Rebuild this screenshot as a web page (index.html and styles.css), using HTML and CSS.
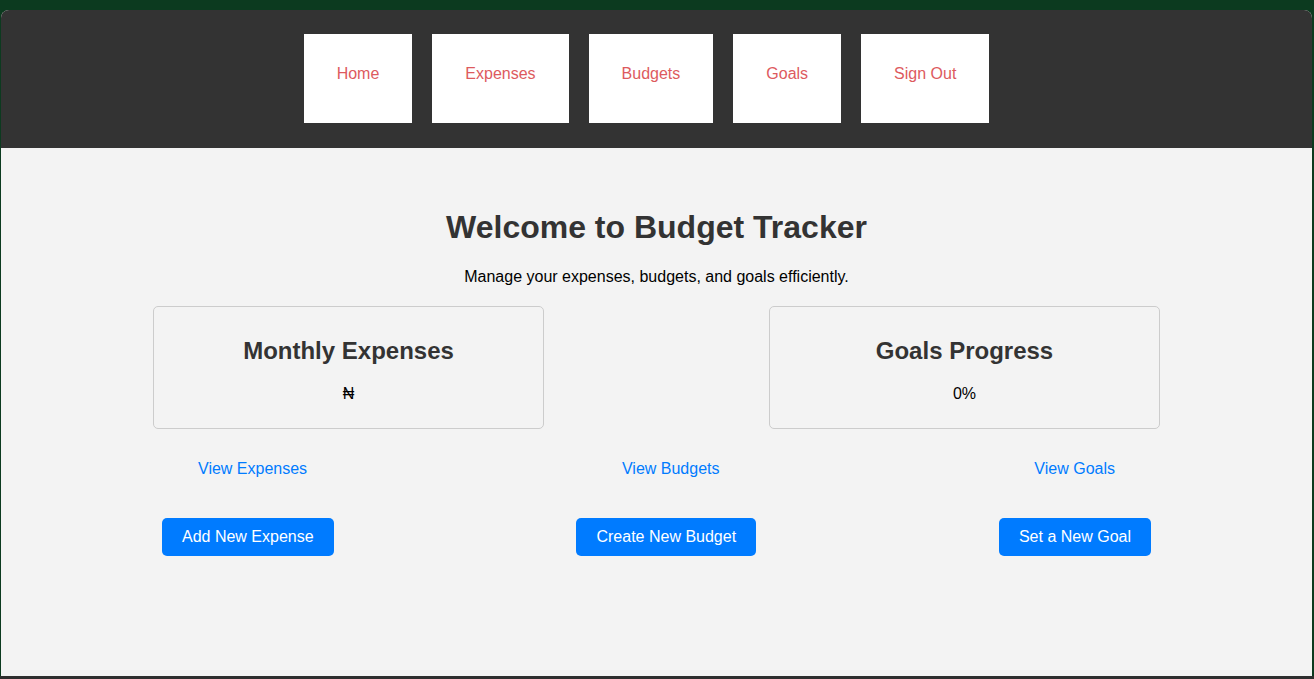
FILE: index.html
```html
<!DOCTYPE html>
<html lang="en">
<head>
<meta charset="utf-8">
<title>Budget Tracker</title>
<link rel="stylesheet" href="styles.css">
</head>
<body>
<div class="window">
  <header class="site-header">
    <nav class="nav">
      <a class="nav-link" href="#">Home</a>
      <a class="nav-link" href="#">Expenses</a>
      <a class="nav-link" href="#">Budgets</a>
      <a class="nav-link" href="#">Goals</a>
      <a class="nav-link" href="#">Sign Out</a>
    </nav>
  </header>
  <main class="main">
    <h1 class="title">Welcome to Budget Tracker</h1>
    <p class="subtitle">Manage your expenses, budgets, and goals efficiently.</p>
    <section class="cards">
      <div class="card">
        <h2 class="card-title">Monthly Expenses</h2>
        <p class="card-value">₦</p>
      </div>
      <div class="card">
        <h2 class="card-title">Goals Progress</h2>
        <p class="card-value">0%</p>
      </div>
    </section>
    <div class="links">
      <a class="link" href="#">View Expenses</a>
      <a class="link" href="#">View Budgets</a>
      <a class="link" href="#">View Goals</a>
    </div>
    <div class="actions">
      <button class="btn">Add New Expense</button>
      <button class="btn">Create New Budget</button>
      <button class="btn">Set a New Goal</button>
    </div>
  </main>
</div>
<div class="taskbar"></div>
</body>
</html>
```
FILE: styles.css
```css
* { box-sizing: border-box; }

html, body {
  margin: 0;
  padding: 0;
}

body {
  background: #0c3a1f;
  font-family: "Liberation Sans", Arial, sans-serif;
  height: 679px;
  overflow: hidden;
}

.window {
  margin: 10px 2px 0 1px;
  height: 666px;
  background: #f3f3f3;
  border-radius: 8px 8px 0 0;
  overflow: hidden;
}

.taskbar {
  height: 3px;
  background: #2e2e2e;
}

.site-header {
  background: #333333;
  height: 138px;
  padding-top: 24px;
}

.nav {
  display: flex;
  justify-content: center;
  gap: 20px;
  padding-right: 20px;
}

.nav-link {
  display: block;
  background: #ffffff;
  color: #dd5a5e;
  text-decoration: none;
  font-size: 16px;
  line-height: 18px;
  padding: 31px 33px 40px;
}

.main {
  padding-top: 61px;
}

.title {
  margin: 0;
  text-align: center;
  font-size: 32px;
  line-height: 37px;
  font-weight: bold;
  color: #333333;
}

.subtitle {
  margin: 22px 0 0;
  text-align: center;
  font-size: 16px;
  line-height: 18px;
  color: #000000;
}

.cards {
  width: 1007px;
  margin: 20px auto 0;
  display: flex;
  justify-content: space-between;
}

.card {
  width: 391px;
  border: 1px solid #cccccc;
  border-radius: 5px;
  padding: 30px 20px 25px;
  text-align: center;
}

.card-title {
  margin: 0;
  font-size: 24px;
  line-height: 28px;
  font-weight: bold;
  color: #333333;
}

.card-value {
  margin: 20px 0 0;
  font-size: 16px;
  line-height: 18px;
  color: #000000;
}

.links {
  width: 1007px;
  margin: 31px auto 0;
  padding: 0 45px;
  display: flex;
  justify-content: space-between;
}

.link {
  color: #007bff;
  text-decoration: none;
  font-size: 16px;
  line-height: 18px;
}

.actions {
  width: 1007px;
  margin: 40px auto 0;
  padding: 0 9px;
  display: flex;
  justify-content: space-between;
}

.btn {
  background: #007bff;
  color: #ffffff;
  border: none;
  border-radius: 5px;
  font-family: "Liberation Sans", Arial, sans-serif;
  font-size: 16px;
  line-height: 18px;
  padding: 10px 20px;
  cursor: pointer;
}
```
